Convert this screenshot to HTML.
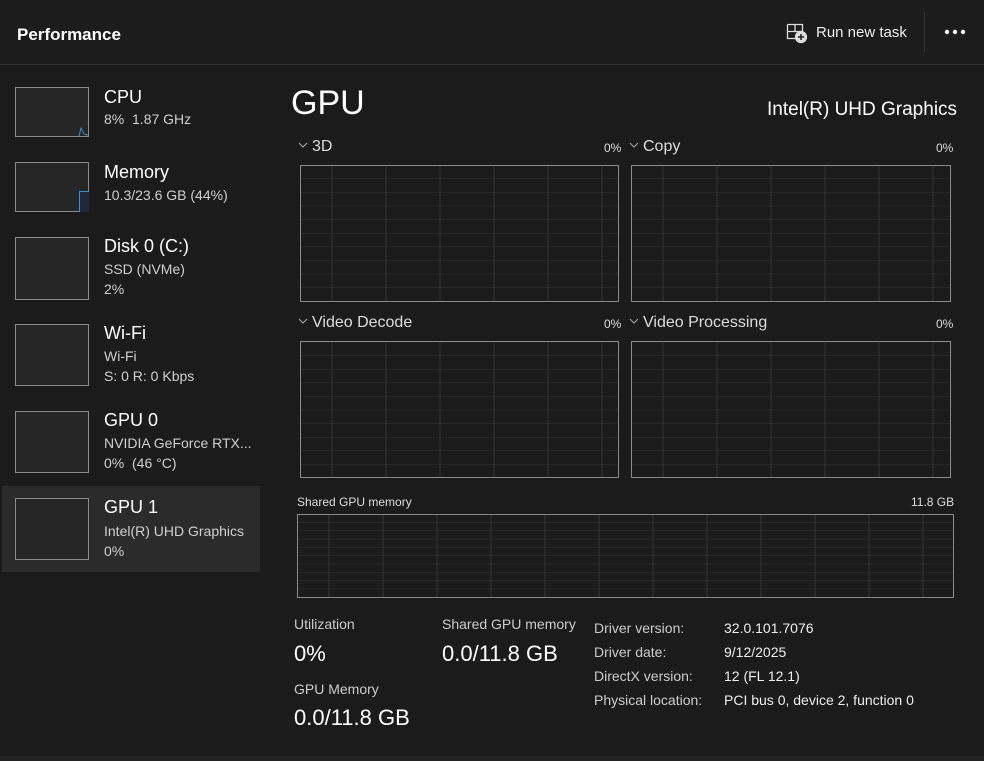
<!DOCTYPE html>
<html><head><style>
body{margin:0;width:984px;height:761px;background:#1b1b1b;font-family:"Liberation Sans",sans-serif;color:#fff;position:relative;overflow:hidden}
.a{position:absolute;white-space:nowrap}
.th{position:absolute;left:15px;width:72px;border:1px solid #8a8a8a;background:#262626}
.t{font-size:18px;color:#fff}
.s{font-size:14px;color:#cfcfcf;line-height:20px}
.lab{font-size:16px;color:#ddd}
.pct{font-size:12px;color:#ddd}
.sm{font-size:14px;color:#ccc}
</style></head><body>
<div class="a" style="left:0;top:0;width:984px;height:64px;background:#1c1c1c;border-bottom:1px solid #333"></div>
<div class="a" style="left:17px;top:25px;font-size:17px;font-weight:bold">Performance</div>
<svg class="a" style="left:786px;top:22px" width="22" height="22" viewBox="0 0 22 22" fill="none" stroke="#ddd" stroke-width="1.3"><path d="M1.5 2.5h15v7M1.5 2.5v14h8M1.5 9.5h15M9 2.5v7"/><circle cx="15" cy="15" r="5.5" fill="#ddd"/><path d="M15 12v6M12 15h6" stroke="#1c1c1c" stroke-width="1.5"/></svg>
<div class="a" style="left:816px;top:24px;font-size:15px;color:#eee">Run new task</div>
<div class="a" style="left:924px;top:12px;width:1px;height:40px;background:#333"></div>
<svg class="a" style="left:944px;top:29px" width="24" height="6"><circle cx="3" cy="3" r="2.2" fill="#fff"/><circle cx="11" cy="3" r="2.2" fill="#fff"/><circle cx="19" cy="3" r="2.2" fill="#fff"/></svg>

<div class="a" style="left:2px;top:486px;width:258px;height:86px;background:#2b2b2b"></div>
<div class="th" style="top:87px;height:48px"><svg width="72" height="48" style="position:absolute"><path d="M63 48 L65 40 L68 46 L72 47" stroke="#3a8fd0" fill="none"/></svg></div>
<div class="a t" style="left:104px;top:87px">CPU</div><div class="a s" style="left:104px;top:109px">8%&nbsp; 1.87 GHz</div>
<div class="th" style="top:162px;height:48px"><div style="position:absolute;left:63px;top:28px;width:9px;height:20px;border-left:1px solid #3a8fd0;border-top:1px solid #3a8fd0;background:#1e2a3c"></div></div>
<div class="a t" style="left:104px;top:162px">Memory</div><div class="a s" style="left:104px;top:185px">10.3/23.6 GB (44%)</div>
<div class="th" style="top:237px;height:61px"></div>
<div class="a t" style="left:104px;top:236px">Disk 0 (C:)</div><div class="a s" style="left:104px;top:259px">SSD (NVMe)<br>2%</div>
<div class="th" style="top:324px;height:60px"></div>
<div class="a t" style="left:104px;top:323px">Wi-Fi</div><div class="a s" style="left:104px;top:346px">Wi-Fi<br>S: 0 R: 0 Kbps</div>
<div class="th" style="top:411px;height:60px"></div>
<div class="a t" style="left:104px;top:410px">GPU 0</div><div class="a s" style="left:104px;top:433px">NVIDIA GeForce RTX...<br>0%&nbsp; (46 °C)</div>
<div class="th" style="top:498px;height:60px"></div>
<div class="a t" style="left:104px;top:497px">GPU 1</div><div class="a s" style="left:104px;top:521px">Intel(R) UHD Graphics<br>0%</div>

<div class="a" style="left:291px;top:84px;font-size:34px">GPU</div>
<div class="a" style="left:767px;top:99px;font-size:19px">Intel(R) UHD Graphics</div>

<svg class="a" style="left:0;top:0" width="984" height="761">
<defs>
<pattern id="p" x="300" y="165" width="54" height="13.6" patternUnits="userSpaceOnUse"><path d="M32 0v14M0 0h54" stroke="#333" stroke-width="1"/></pattern>
<pattern id="q" x="631" y="165" width="54" height="13.6" patternUnits="userSpaceOnUse"><path d="M32 0v14M0 0h54" stroke="#333" stroke-width="1"/></pattern>
<pattern id="r" x="297" y="514" width="54" height="8.3" patternUnits="userSpaceOnUse"><path d="M32 0v9M0 0h54" stroke="#333" stroke-width="1"/></pattern>
</defs>
<rect x="300.5" y="165.5" width="318" height="136" fill="url(#p)" stroke="#8a8a8a"/>
<rect x="631.5" y="165.5" width="319" height="136" fill="url(#q)" stroke="#8a8a8a"/>
<rect x="300.5" y="341.5" width="318" height="136" fill="url(#p)" stroke="#8a8a8a"/>
<rect x="631.5" y="341.5" width="319" height="136" fill="url(#q)" stroke="#8a8a8a"/>
<rect x="297.5" y="514.5" width="656" height="83" fill="url(#r)" stroke="#8a8a8a"/>
<g stroke="#aaa" fill="none"><path d="M299 143l4 4 4-4M630 143l4 4 4-4M299 319l4 4 4-4M630 319l4 4 4-4"/></g>
</svg>
<div class="a lab" style="left:312px;top:138px">3D</div><div class="a pct" style="left:604px;top:141px">0%</div>
<div class="a lab" style="left:643px;top:138px">Copy</div><div class="a pct" style="left:936px;top:141px">0%</div>
<div class="a lab" style="left:312px;top:314px">Video Decode</div><div class="a pct" style="left:604px;top:317px">0%</div>
<div class="a lab" style="left:643px;top:314px">Video Processing</div><div class="a pct" style="left:936px;top:317px">0%</div>
<div class="a pct" style="left:297px;top:495px">Shared GPU memory</div><div class="a pct" style="left:911px;top:495px">11.8 GB</div>

<div class="a sm" style="left:294px;top:616px">Utilization</div>
<div class="a" style="left:294px;top:641px;font-size:22px">0%</div>
<div class="a sm" style="left:294px;top:681px">GPU Memory</div>
<div class="a" style="left:294px;top:705px;font-size:22px">0.0/11.8 GB</div>
<div class="a sm" style="left:442px;top:616px">Shared GPU memory</div>
<div class="a" style="left:442px;top:641px;font-size:22px">0.0/11.8 GB</div>
<div class="a sm" style="left:594px;top:616px;line-height:24px">Driver version:<br>Driver date:<br>DirectX version:<br>Physical location:</div>
<div class="a sm" style="left:724px;top:616px;line-height:24px;color:#eee">32.0.101.7076<br>9/12/2025<br>12 (FL 12.1)<br>PCI bus 0, device 2, function 0</div>
<div class="a" style="left:0;top:756px;width:984px;height:5px;background:#222"></div>
</body></html>
